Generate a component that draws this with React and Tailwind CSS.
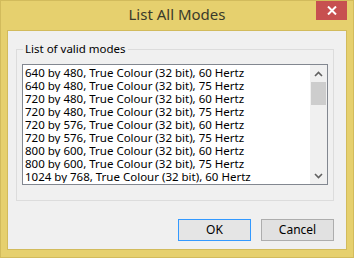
import React from 'react';

const modes = [
  '640 by 480, True Colour (32 bit), 60 Hertz',
  '640 by 480, True Colour (32 bit), 75 Hertz',
  '720 by 480, True Colour (32 bit), 60 Hertz',
  '720 by 480, True Colour (32 bit), 75 Hertz',
  '720 by 576, True Colour (32 bit), 60 Hertz',
  '720 by 576, True Colour (32 bit), 75 Hertz',
  '800 by 600, True Colour (32 bit), 60 Hertz',
  '800 by 600, True Colour (32 bit), 75 Hertz',
  '1024 by 768, True Colour (32 bit), 60 Hertz',
];

export default function App() {
  return (
    <div className="w-[354px] h-[258px] bg-[#e6d06e] border border-[#d2bb5c] flex flex-col font-['Noto_Sans',sans-serif] select-none">
      {/* Title bar */}
      <div className="h-[29px] relative flex items-center justify-center">
        <span className="text-[15px] text-[#3a3a2a] leading-none -mt-[2px]">List All Modes</span>
        <button className="absolute top-0 right-[6px] w-[31px] h-[19px] bg-[#c75050] flex items-center justify-center">
          <svg width="10" height="9" viewBox="0 0 10 9">
            <path d="M1 0.5 L9 8.5 M9 0.5 L1 8.5" stroke="#fff" strokeWidth="2" />
          </svg>
        </button>
      </div>

      {/* Client area */}
      <div className="mx-[6px] mb-[7px] flex-1 bg-[#f0f0f0] border border-[#d2bb5c] flex flex-col">
        {/* Group box */}
        <div className="relative ml-[8px] mt-[18px] w-[318px] h-[152px] border border-[#dcdcdc]">
          <span className="absolute -top-[9px] left-[6px] px-[2px] bg-[#f0f0f0] text-[11.5px] leading-[16px] text-black">
            List of valid modes
          </span>
          <div className="ml-[5px] mt-[14px] w-[306px] h-[121px] bg-white border border-[#828790] flex overflow-hidden">
            <div className="flex-1 pl-[2px] pt-[1px] overflow-hidden">
              {modes.map((m) => (
                <div key={m} className="h-[13px] text-[11.5px] leading-[13px] text-black whitespace-nowrap overflow-hidden">
                  {m}
                </div>
              ))}
            </div>
            {/* Scrollbar */}
            <div className="w-[17px] bg-[#f0f0f0] flex flex-col">
              <div className="h-[17px] flex items-center justify-center">
                <svg width="9" height="6" viewBox="0 0 9 6">
                  <path d="M1 5 L4.5 1.5 L8 5" stroke="#606060" strokeWidth="1.6" fill="none" />
                </svg>
              </div>
              <div className="h-[23px] bg-[#cdcdcd] mx-[1px]" />
              <div className="flex-1" />
              <div className="h-[17px] flex items-center justify-center">
                <svg width="9" height="6" viewBox="0 0 9 6">
                  <path d="M1 1 L4.5 4.5 L8 1" stroke="#606060" strokeWidth="1.6" fill="none" />
                </svg>
              </div>
            </div>
          </div>
        </div>

        {/* Buttons */}
        <div className="mt-[18px] flex justify-end gap-[10px] pr-[12px]">
          <button className="w-[73px] h-[22px] bg-[#e5e5e5] border border-[#3399ff] text-[12px] text-black flex items-center justify-center">
            OK
          </button>
          <button className="w-[73px] h-[22px] bg-[#e1e1e1] border border-[#adadad] text-[12px] text-black flex items-center justify-center">
            Cancel
          </button>
        </div>
      </div>
    </div>
  );
}
